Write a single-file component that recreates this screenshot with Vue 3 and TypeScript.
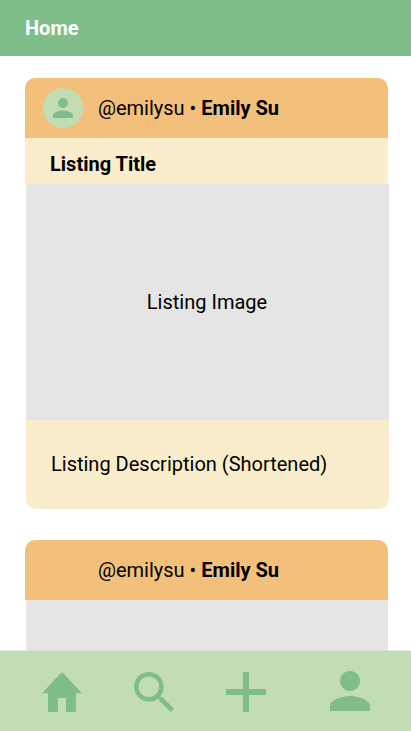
<script setup lang="ts">
interface Listing {
  id: number
  handle: string
  name: string
  avatar: boolean
  title?: string
  image?: string
  description?: string
}

const listings: Listing[] = [
  {
    id: 1,
    handle: '@emilysu',
    name: 'Emily Su',
    avatar: true,
    title: 'Listing Title',
    image: 'Listing Image',
    description: 'Listing Description (Shortened)',
  },
  { id: 2, handle: '@emilysu', name: 'Emily Su', avatar: false },
]

const personPath =
  'M12 12c2.21 0 4-1.79 4-4s-1.79-4-4-4-4 1.79-4 4 1.79 4 4 4zm0 2c-2.67 0-8 1.34-8 4v2h16v-2c0-2.66-5.33-4-8-4z'

const tabs = [
  { id: 'home', viewBox: '2 3 20 17', path: 'M10 20v-6h4v6h5v-8h3L12 3 2 12h3v8z' },
  {
    id: 'search',
    viewBox: '3 3 17.49 17.49',
    path: 'M15.5 14h-.79l-.28-.27C15.41 12.59 16 11.11 16 9.5 16 5.91 13.09 3 9.5 3S3 5.91 3 9.5 5.91 16 9.5 16c1.61 0 3.09-.59 4.23-1.57l.27.28v.79l5 4.99L20.49 19l-4.99-5zm-6 0C7.01 14 5 11.99 5 9.5S7.01 5 9.5 5 14 7.01 14 9.5 11.99 14 9.5 14z',
  },
  { id: 'add', viewBox: '0 0 40 40', path: 'M17 0h6v17h17v6H23v17h-6V23H0v-6h17z' },
  { id: 'profile', viewBox: '4 4 16 16', path: personPath },
]
</script>

<template>
  <div class="screen">
    <header class="topbar">Home</header>

    <main class="feed">
      <article v-for="item in listings" :key="item.id" class="card">
        <div class="author">
          <span class="avatar" :class="{ empty: !item.avatar }">
            <svg v-if="item.avatar" viewBox="4 4 16 16"><path :d="personPath" /></svg>
          </span>
          <span class="byline">{{ item.handle }} • <b>{{ item.name }}</b></span>
        </div>
        <h2 v-if="item.title" class="title">{{ item.title }}</h2>
        <div class="image" :class="{ narrow: !item.image }">{{ item.image }}</div>
        <p v-if="item.description" class="description">{{ item.description }}</p>
      </article>
    </main>

    <nav class="tabbar">
      <button v-for="tab in tabs" :key="tab.id" class="tab" :class="tab.id" type="button">
        <svg :viewBox="tab.viewBox" preserveAspectRatio="none"><path :d="tab.path" /></svg>
      </button>
    </nav>
  </div>
</template>

<style>
body {
  margin: 0;
  background: #fff;
}
</style>

<style scoped>
.screen {
  display: flex;
  flex-direction: column;
  width: 411px;
  height: 731px;
  overflow: hidden;
  background: #fff;
  color: #000;
  font-family: Roboto, sans-serif;
  font-size: 20px;
  line-height: 24px;
}

.topbar {
  box-sizing: border-box;
  flex: none;
  height: 56px;
  padding: 16px 25px;
  background: #7fbd8a;
  color: #fff;
  font-weight: 700;
}

.feed {
  display: flex;
  flex: 1;
  flex-direction: column;
  gap: 31px;
  min-height: 0;
  overflow: hidden;
  padding: 22px 22px 0 25px;
}

.card {
  flex: none;
  width: 364px;
}

.author {
  box-sizing: border-box;
  display: flex;
  align-items: center;
  gap: 15px;
  width: 363px;
  height: 60px;
  padding-left: 18px;
  border-radius: 10px 10px 0 0;
  background: #f3c07b;
}

.avatar {
  display: grid;
  place-items: center;
  width: 40px;
  height: 40px;
  border-radius: 50%;
  background: #c2dcb3;
}

.avatar.empty {
  background: none;
}

.avatar svg {
  width: 20px;
  height: 20px;
}

svg {
  display: block;
  fill: #7fbd8a;
}

.title {
  box-sizing: border-box;
  width: 363px;
  height: 46px;
  margin: 0;
  padding: 14px 25px 0;
  background: #f9edcb;
  font-size: 20px;
  font-weight: 700;
}

.image {
  box-sizing: border-box;
  display: grid;
  place-items: center;
  height: 236px;
  margin-left: 1px;
  padding-right: 1px;
  background: #e5e5e5;
}

.image.narrow {
  margin-right: 1px;
}

.description {
  box-sizing: border-box;
  height: 89px;
  margin: 0 0 0 1px;
  padding: 32px 25px;
  border-radius: 0 0 10px 10px;
  background: #f9edcb;
}

.tabbar {
  z-index: 1;
  box-sizing: border-box;
  display: flex;
  flex: none;
  height: 81px;
  margin-top: -1px;
  padding: 21px 41px 0 42px;
  border-top: 1px solid rgba(194, 220, 179, 0.5);
  background: #c2dcb3;
  background-clip: padding-box;
}

.tab {
  width: 40px;
  height: 40px;
  padding: 0;
  border: 0;
  background: none;
}

.tab svg {
  width: 40px;
  height: 40px;
}

.tab.search,
.tab.add {
  margin-left: 52px;
}

.tab.profile {
  margin-top: -1px;
  margin-left: 64px;
}

.feed {
  flex-basis: 0;
  margin-bottom: 0;
}
</style>
